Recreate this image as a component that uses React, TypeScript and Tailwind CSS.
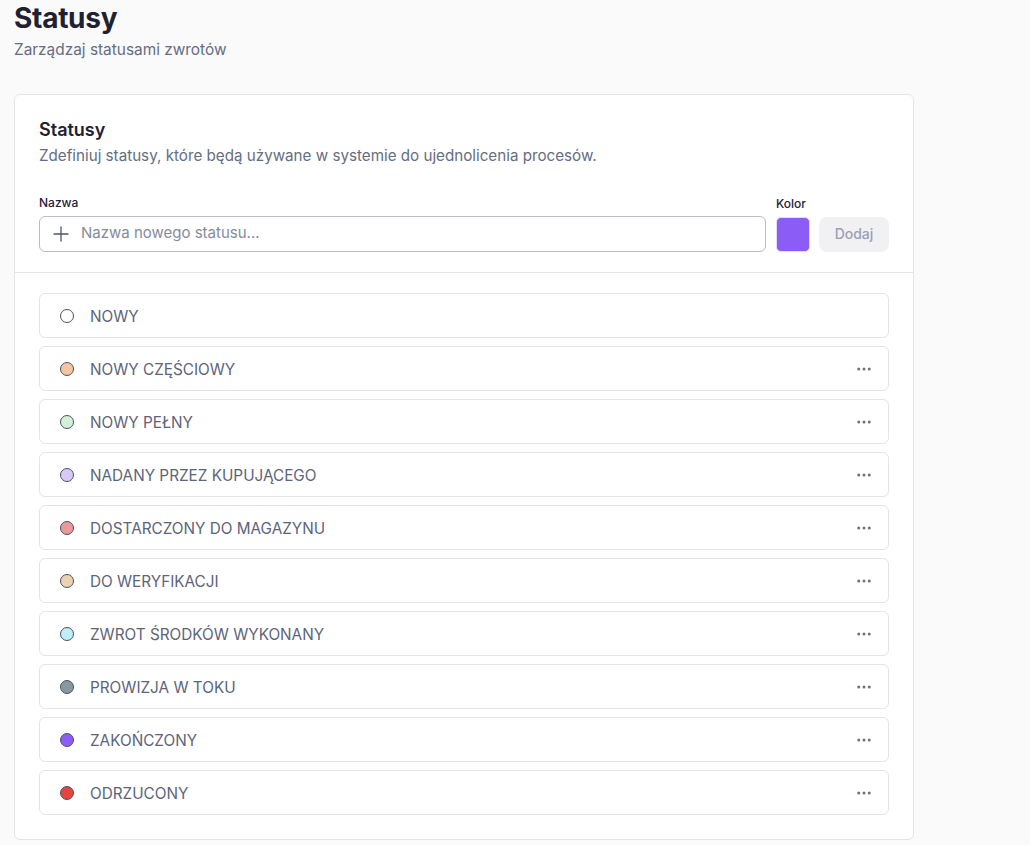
import React from "react";
import { Plus, Ellipsis } from "lucide-react";

const statuses: { name: string; color: string; menu: boolean }[] = [
  { name: "NOWY", color: "#ffffff", menu: false },
  { name: "NOWY CZĘŚCIOWY", color: "#f6c3a3", menu: true },
  { name: "NOWY PEŁNY", color: "#d3f1d8", menu: true },
  { name: "NADANY PRZEZ KUPUJĄCEGO", color: "#d9c9f7", menu: true },
  { name: "DOSTARCZONY DO MAGAZYNU", color: "#e99a9a", menu: true },
  { name: "DO WERYFIKACJI", color: "#ead2b0", menu: true },
  { name: "ZWROT ŚRODKÓW WYKONANY", color: "#bfeef7", menu: true },
  { name: "PROWIZJA W TOKU", color: "#85999f", menu: true },
  { name: "ZAKOŃCZONY", color: "#8b5cf6", menu: true },
  { name: "ODRZUCONY", color: "#e5443f", menu: true },
];

export default function App() {
  return (
    <div
      className="min-h-[845px] bg-[#fafafa] px-[14px] text-[#1f2133]"
      style={{ fontFamily: "Inter, 'Noto Sans', sans-serif" }}
    >
      <h1 className="text-[28px] leading-9 font-bold tracking-[-0.01em] text-[#1f2133]">Statusy</h1>
      <p className="mt-1 text-[15.4px] leading-5 text-[#656d82]">Zarządzaj statusami zwrotów</p>

      <div className="mt-[34px] w-[900px] rounded-md border border-[#e3e4e8] bg-white">
        <div className="px-6 pt-6 pb-5">
          <h2 className="text-lg leading-tight font-semibold text-[#1f2133]">Statusy</h2>
          <p className="mt-1 text-[15.2px] leading-5 text-[#656d82]">
            Zdefiniuj statusy, które będą używane w systemie do ujednolicenia procesów.
          </p>
          <div className="mt-[29px] flex items-end gap-[9px]">
            <div className="flex min-w-0 flex-1 flex-col">
              <label className="mb-[5px] text-xs leading-4 font-medium text-[#1f2133]">Nazwa</label>
              <div className="flex h-[36px] items-center gap-2 rounded-md border border-[#b9bcca] bg-white pl-[9px]">
                <Plus size={24} strokeWidth={1.3} className="text-[#4f566b]" />
                <span className="text-[15px] text-[#858b9d]">Nazwa nowego statusu...</span>
              </div>
            </div>
            <div className="ml-[1px] flex w-[34px] shrink-0 flex-col">
              <label className="mb-[5px] text-xs leading-4 font-medium whitespace-nowrap text-[#1f2133]">Kolor</label>
              <div className="h-[35px] w-[34px] rounded-[5px] border border-[#e2dcf5] bg-[#8b5cf6]" />
            </div>
            <button className="flex h-[35px] w-[70px] shrink-0 items-center justify-center rounded-lg bg-[#f1f1f4] text-sm font-medium text-[#9aa0b2]">
              Dodaj
            </button>
          </div>
        </div>
        <div className="border-t border-[#e3e4e8] px-6 pt-5 pb-6">
          <div className="flex flex-col gap-2">
            {statuses.map((s) => (
              <div
                key={s.name}
                className="flex h-[45px] items-center rounded-md border border-[#e3e4e8] bg-white pt-px pr-[15px] pl-5"
              >
                <span
                  className="h-[14px] w-[14px] shrink-0 rounded-full border border-[#4b5263]"
                  style={{ backgroundColor: s.color }}
                />
                <span className="ml-4 flex-1 pt-[2px] text-[15.3px] leading-6 text-[#5d6478]">{s.name}</span>
                {s.menu && <Ellipsis size={18} strokeWidth={2} className="text-[#6b7180]" />}
              </div>
            ))}
          </div>
        </div>
      </div>
    </div>
  );
}
